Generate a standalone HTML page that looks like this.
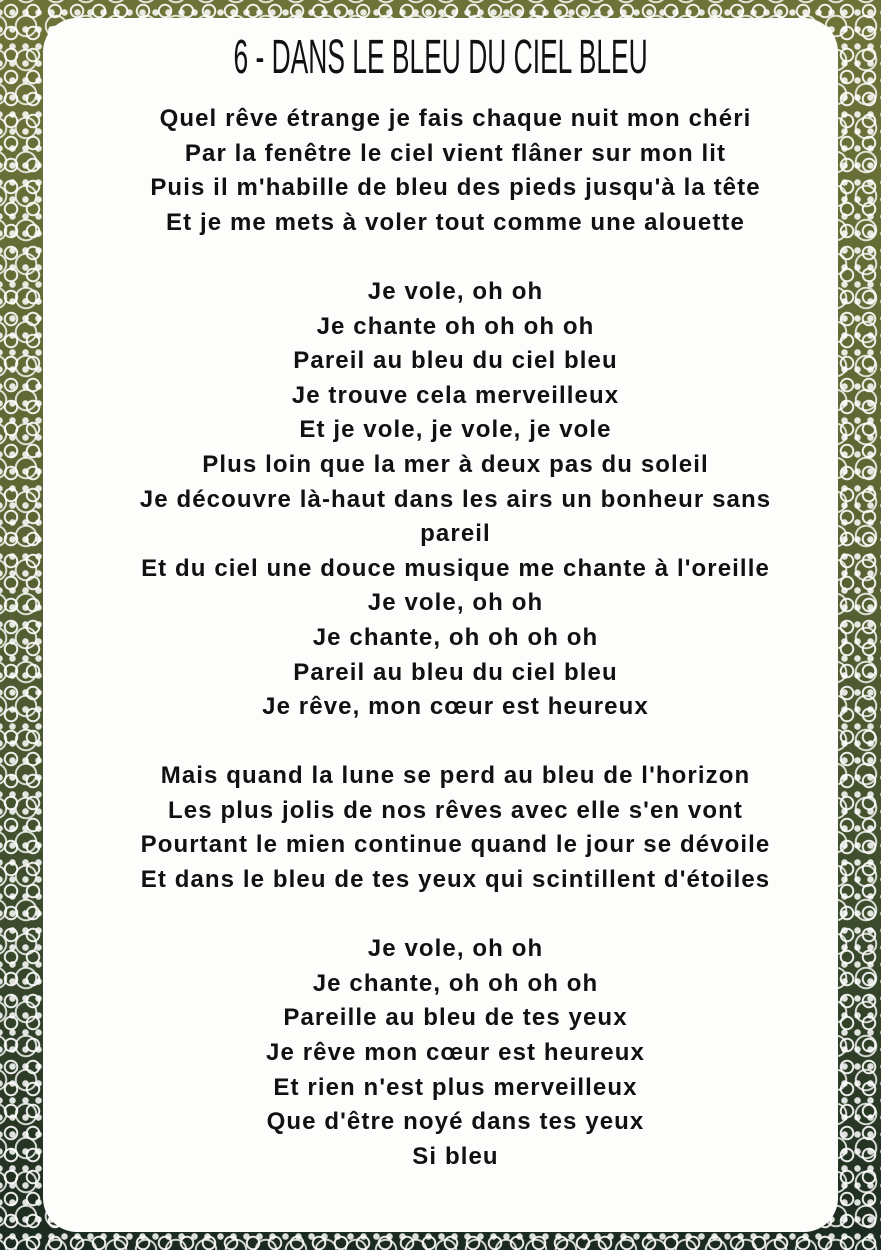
<!DOCTYPE html>
<html><head><meta charset="utf-8"><style>
html,body{margin:0;padding:0}
body{width:881px;height:1250px;position:relative;overflow:hidden;
background:linear-gradient(180deg,#6d7238 0%,#5d6634 40%,#3a4a2c 75%,#1b2a1f 100%);}
.lace{position:absolute;inset:0;
background-image:
radial-gradient(circle at 50% 50%, transparent 5px, rgba(255,255,255,.9) 5.5px, rgba(255,255,255,.9) 7px, transparent 7.5px),
radial-gradient(circle at 50% 50%, rgba(255,255,255,.85) 3px, transparent 3.5px),
radial-gradient(circle at 50% 50%, transparent 9px, rgba(255,255,255,.8) 9.5px, rgba(255,255,255,.8) 11px, transparent 11.5px);
background-size:22px 22px,13px 17px,30px 34px;
background-position:0 0,6px 4px,11px 9px;}
.panel{position:absolute;left:43px;top:18px;width:795px;height:1214px;background:#fdfdfc;border-radius:34px;}
.title{position:absolute;left:0;width:881px;top:33px;text-align:center;height:50px}
.title span{display:inline-block;font-family:"Liberation Sans Narrow","Liberation Sans",sans-serif;font-size:48px;color:#111;transform:scaleX(0.55);white-space:nowrap;line-height:50px}
.text{position:absolute;left:0;width:911px;top:102px;text-align:center;font-family:"Liberation Sans",sans-serif;font-weight:bold;font-size:24px;letter-spacing:1.1px;line-height:34.6px;color:#111}
</style></head><body>
<div class="lace"></div>
<div class="panel"></div>
<div class="title"><span>6 - DANS LE BLEU DU CIEL BLEU</span></div>
<div class="text">Quel rêve étrange je fais chaque nuit mon chéri<br>Par la fenêtre le ciel vient flâner sur mon lit<br>Puis il m'habille de bleu des pieds jusqu'à la tête<br>Et je me mets à voler tout comme une alouette<br><br>Je vole, oh oh<br>Je chante oh oh oh oh<br>Pareil au bleu du ciel bleu<br>Je trouve cela merveilleux<br>Et je vole, je vole, je vole<br>Plus loin que la mer à deux pas du soleil<br>Je découvre là-haut dans les airs un bonheur sans<br>pareil<br>Et du ciel une douce musique me chante à l'oreille<br>Je vole, oh oh<br>Je chante, oh oh oh oh<br>Pareil au bleu du ciel bleu<br>Je rêve, mon cœur est heureux<br><br>Mais quand la lune se perd au bleu de l'horizon<br>Les plus jolis de nos rêves avec elle s'en vont<br>Pourtant le mien continue quand le jour se dévoile<br>Et dans le bleu de tes yeux qui scintillent d'étoiles<br><br>Je vole, oh oh<br>Je chante, oh oh oh oh<br>Pareille au bleu de tes yeux<br>Je rêve mon cœur est heureux<br>Et rien n'est plus merveilleux<br>Que d'être noyé dans tes yeux<br>Si bleu</div>
</body></html>
